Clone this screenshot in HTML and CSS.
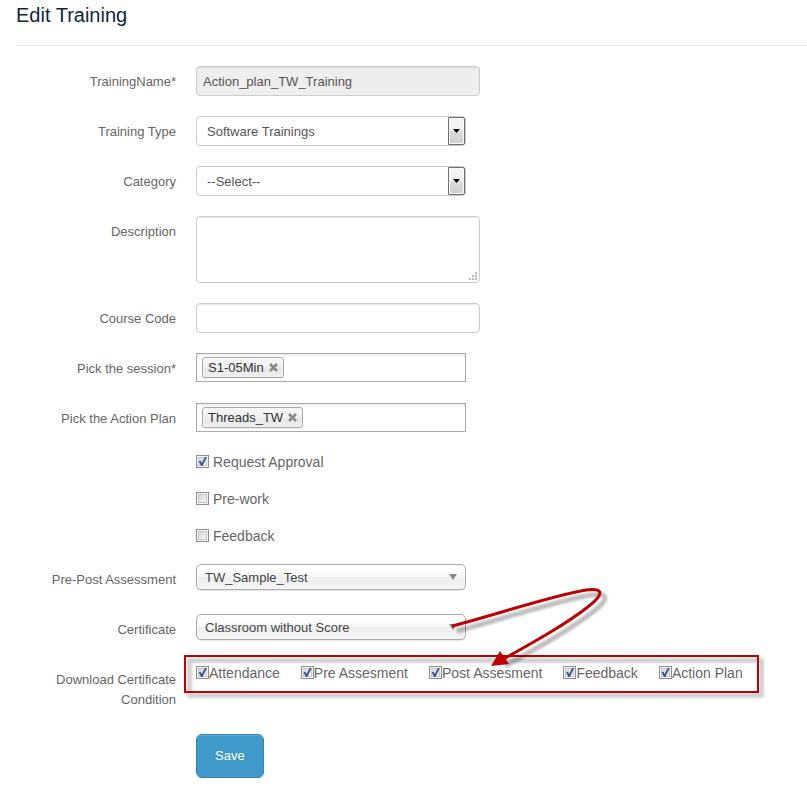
FILE: index.html
```html
<!DOCTYPE html>
<html lang="en">
<head>
<meta charset="utf-8">
<title>Edit Training</title>
<link rel="stylesheet" href="styles.css">
</head>
<body>
<main class="page">
  <h1 class="title">Edit Training</h1>
  <form class="form">
    <div class="row">
      <label class="label" for="name">TrainingName*</label>
      <input class="field" id="name" type="text" value="Action_plan_TW_Training" readonly>
    </div>
    <div class="row">
      <label class="label" for="type">Training Type</label>
      <div class="picker">
        <select class="select" id="type"><option>Software Trainings</option></select>
        <span class="drop"><svg width="7" height="4" viewBox="0 0 7 4"><path d="M0 0h7L3.500 4z"/></svg></span>
      </div>
    </div>
    <div class="row">
      <label class="label" for="category">Category</label>
      <div class="picker">
        <select class="select" id="category"><option>--Select--</option></select>
        <span class="drop"><svg width="7" height="4" viewBox="0 0 7 4"><path d="M0 0h7L3.500 4z"/></svg></span>
      </div>
    </div>
    <div class="row">
      <label class="label" for="description">Description</label>
      <div class="area">
        <textarea class="field textarea" id="description"></textarea>
        <svg class="grip" width="8" height="8" viewBox="0 0 8 8"><path d="M6 0h2v2H6zM3 3h2v2H3zM6 3h2v2H6zM0 6h2v2H0zM3 6h2v2H3zM6 6h2v2H6z"/></svg>
      </div>
    </div>
    <div class="row">
      <label class="label" for="code">Course Code</label>
      <input class="field" id="code" type="text">
    </div>
    <div class="row">
      <label class="label" for="session">Pick the session*</label>
      <div class="tags">
        <span class="tag">S1-05Min<button class="remove" type="button" aria-label="Remove"><svg width="9" height="9" viewBox="0 0 9 9"><path d="M1 1l7 7M8 1L1 8"/></svg></button></span>
        <input class="tag-input" id="session" type="text">
      </div>
    </div>
    <div class="row">
      <label class="label" for="plan">Pick the Action Plan</label>
      <div class="tags">
        <span class="tag">Threads_TW<button class="remove" type="button" aria-label="Remove"><svg width="9" height="9" viewBox="0 0 9 9"><path d="M1 1l7 7M8 1L1 8"/></svg></button></span>
        <input class="tag-input" id="plan" type="text">
      </div>
    </div>
    <div class="row row-check">
      <label class="check check-spaced"><input type="checkbox" checked>Request Approval</label>
    </div>
    <div class="row row-check">
      <label class="check check-spaced"><input type="checkbox">Pre-work</label>
    </div>
    <div class="row row-check">
      <label class="check check-spaced"><input type="checkbox">Feedback</label>
    </div>
    <div class="row">
      <label class="label" for="assessment">Pre-Post Assessment</label>
      <div class="picker">
        <select class="chosen" id="assessment"><option>TW_Sample_Test</option></select>
        <svg class="chevron" width="8" height="6" viewBox="0 0 8 6"><path d="M0 0h8L4 6z"/></svg>
      </div>
    </div>
    <div class="row">
      <label class="label" for="certificate">Certificate</label>
      <div class="picker">
        <select class="chosen" id="certificate"><option>Classroom without Score</option></select>
        <svg class="chevron" width="8" height="6" viewBox="0 0 8 6"><path d="M0 0h8L4 6z"/></svg>
        <svg class="arrow" width="180" height="100" viewBox="0 0 180 100">
          <g class="arrow-shadow" transform="translate(5 5)">
            <path d="M12 42C55 31 114 11 146 6C166 3 162 12 149 22C128 39 94 58 60 77"/>
          </g>
          <path class="arrow-line" d="M12 42C55 31 114 11 146 6C166 3 162 12 149 22C128 39 94 58 60 77"/>
          <path class="arrow-head" d="M51 82L60 67L69 80z"/>
        </svg>
      </div>
    </div>
    <div class="row">
      <span class="label" id="conditions">Download Certificate Condition</span>
      <div class="conditions" role="group" aria-labelledby="conditions">
        <label class="check"><input type="checkbox" checked>Attendance</label>
        <label class="check"><input type="checkbox" checked>Pre Assesment</label>
        <label class="check"><input type="checkbox" checked>Post Assesment</label>
        <label class="check"><input type="checkbox" checked>Feedback</label>
        <label class="check"><input type="checkbox" checked>Action Plan</label>
      </div>
    </div>
    <div class="row row-actions">
      <button class="save" type="submit">Save</button>
    </div>
  </form>
</main>
</body>
</html>
```
FILE: styles.css
```css
* { box-sizing: border-box; }

body {
  margin: 0;
  background: #fff;
  color: #555;
  font: 13px/20px "Liberation Sans", Arial, sans-serif;
}

.page { padding: 0 0 16px 16px; }

.title {
  margin: 0 0 20px;
  padding: 5px 0 20px;
  border-bottom: 1px solid #e5e5e5;
  color: #12263f;
  font-size: 20px;
  font-weight: 400;
  line-height: 20px;
}

input, select, textarea, button { margin: 0; font: inherit; color: inherit; }

.row {
  display: grid;
  grid-template-columns: 160px minmax(0, 1fr);
  column-gap: 20px;
  align-items: start;
  min-height: 30px;
  margin-bottom: 20px;
}

.label { padding-top: 6px; color: #666; text-align: right; }

.field {
  display: block;
  width: 284px;
  max-width: 100%;
  height: 30px;
  padding: 4px 6px;
  border: 1px solid #ccc;
  border-radius: 4px;
  background: #fff;
  box-shadow: inset 0 1px 1px rgba(0, 0, 0, .08);
}

.field:read-only { background: #eee; }

.area { position: relative; width: 284px; max-width: 100%; }
.textarea { height: 67px; resize: none; }
.grip { position: absolute; right: 3px; bottom: 3px; fill: #bbb; }

.picker { position: relative; width: 270px; max-width: 100%; }

.select, .chosen {
  display: block;
  width: 100%;
  appearance: none;
}

.select {
  height: 30px;
  padding: 5px 24px 3px 10px;
  border: 1px solid #ccc;
  border-radius: 4px;
  background: #fff;
}

.drop {
  position: absolute;
  top: 1px;
  right: 1px;
  display: grid;
  place-items: center;
  width: 17px;
  height: 28px;
  border: 1px solid #707070;
  border-radius: 0 2px 2px 0;
  background: linear-gradient(#f2f2f2 50%, #ddd 50%, #cfcfcf);
  box-shadow: inset 0 0 0 1px #f8f8f8;
  pointer-events: none;
}

.tags {
  display: flex;
  align-items: center;
  width: 270px;
  max-width: 100%;
  height: 29px;
  padding: 0 5px;
  border: 1px solid #aaa;
  background: linear-gradient(#eee 1%, #fff 15%);
}

.tag {
  display: flex;
  align-items: center;
  gap: 5px;
  height: 21px;
  padding: 0 5px;
  border: 1px solid #aaa;
  border-radius: 3px;
  background: linear-gradient(#f4f4f4 20%, #f0f0f0 50%, #e8e8e8 52%, #eee);
  box-shadow: 0 0 2px #fff inset, 0 1px 0 rgba(0, 0, 0, .05);
  color: #333;
  white-space: nowrap;
}

.remove {
  display: flex;
  padding: 0;
  border: 0;
  background: none;
  color: #888;
}

.remove path { fill: none; stroke: currentColor; stroke-width: 2.500; }

.tag-input {
  flex: 1;
  min-width: 0;
  border: 0;
  outline: 0;
  background: transparent;
}

.row-check { min-height: 17px; }
.row-check .check, .row-actions .save { grid-column: 2; justify-self: start; }

.check {
  display: flex;
  align-items: flex-start;
  height: 17px;
  color: #666;
  font-size: 14px;
  line-height: 19px;
  white-space: nowrap;
}

.check-spaced { gap: 4px; }

.check input {
  display: grid;
  place-items: center;
  width: 13px;
  height: 13px;
  margin-top: 2px;
  appearance: none;
  border: 1px solid #8e8f8f;
  background: linear-gradient(135deg, #c8ccd3, #f6f6f6 80%);
  box-shadow: inset 0 0 0 1px #f4f4f4, inset 0 0 0 2px #c5c9cf;
}

.check input:checked::before {
  content: "";
  width: 9px;
  height: 9px;
  background: #3b5299;
  clip-path: polygon(8% 48%, 28% 42%, 42% 66%, 76% 0, 98% 0, 50% 100%, 34% 100%);
}

.chosen {
  height: 26px;
  padding: 1px 24px 0 8px;
  border: 1px solid #aaa;
  border-radius: 5px;
  background: linear-gradient(#fff 20%, #f6f6f6 50%, #eee 52%, #f4f4f4);
  box-shadow: 0 0 3px #fff inset, 0 1px 1px rgba(0, 0, 0, .1);
  color: #444;
}

.chevron {
  position: absolute;
  top: 10px;
  right: 9px;
  fill: #888;
  pointer-events: none;
}

/* Callout arrow from the certificate list down to its conditions. */
.arrow {
  position: absolute;
  top: -30px;
  left: 244px;
  z-index: 2;
  overflow: visible;
  pointer-events: none;
}

.arrow-line { fill: none; stroke: #c00000; stroke-width: 3; }
.arrow-head { fill: #c00000; }

.arrow-shadow {
  fill: none;
  stroke: #000;
  stroke-width: 5;
  opacity: .25;
  filter: blur(1px);
}

.conditions {
  position: relative;
  display: flex;
  gap: 21px;
  justify-self: start;
}

.conditions::before, .conditions::after {
  content: "";
  position: absolute;
  inset: -9px -16px -12px -12px;
  pointer-events: none;
}

.conditions::before {
  inset: -6px -21px -17px -9px;
  border: 5px solid rgba(0, 0, 0, .18);
  border-radius: 2px;
  filter: blur(1px);
}

.conditions::after { border: 2px solid #c00000; }

.row-actions { padding-top: 4px; }

.save {
  height: 44px;
  padding: 0 18px;
  border: 1px solid #3083ad;
  border-radius: 6px;
  background: #3f99c9;
  box-shadow: inset 0 1px 0 rgba(255, 255, 255, .2);
  color: #fff;
}
```
